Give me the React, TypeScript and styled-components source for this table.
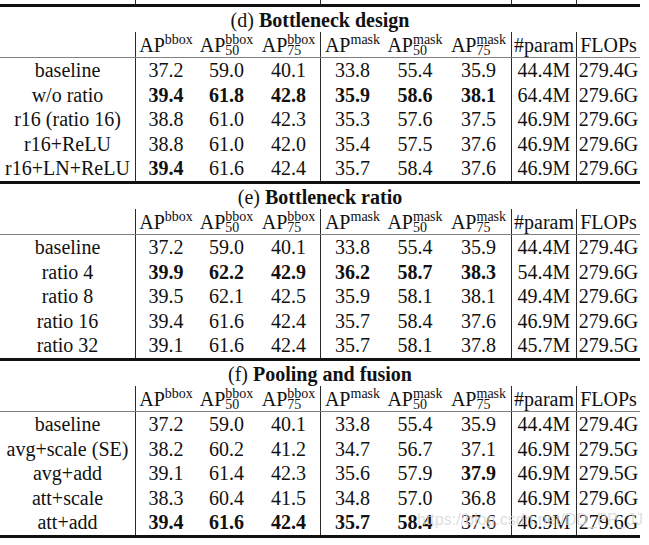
import React from 'react'
import styled, { createGlobalStyle } from 'styled-components'

const GlobalStyle = createGlobalStyle`
    body {
        margin: 0;
        background: #ffffff;
    }
`

// column widths, borders sit on the left edge of columns 1, 4, 7, 8
const columns = '135px 61px 61px 63px 64px 62px 65px 65px 64px'
const dividers = [1, 4, 7, 8]

const Page = styled.div`
    position: relative;
    width: 649px;
    height: 545px;
    background: #ffffff;
    font-family: 'Liberation Serif', 'Times New Roman', serif;
    color: #111111;
`

const Table = styled.div`
    width: 640px;
    display: flex;
    flex-direction: column;
`

const Row = styled.div<{ $height: number }>`
    display: grid;
    grid-template-columns: ${columns};
    height: ${p => p.$height}px;
`

const Cell = styled.div<{ $divider?: boolean; $bold?: boolean }>`
    box-sizing: border-box;
    border-left: ${p => (p.$divider ? '1px solid #2a2a2a' : 'none')};
    text-align: center;
    font-size: 20px;
    line-height: 24.6px;
    font-weight: ${p => (p.$bold ? 700 : 400)};
    white-space: nowrap;
`

const HeadCell = styled(Cell)`
    padding-top: 2px;
    line-height: 23px;
`

const Scripts = styled.span`
    display: inline-flex;
    flex-direction: column;
    align-items: flex-start;
    vertical-align: 8px;
    font-size: 14px;
    line-height: 11px;
`

const Script = styled.span`
    display: block;
`

const ThickRule = styled.div`
    height: 3px;
    background: #111111;
`

const HeadRule = styled.div`
    height: 1px;
    background: #808080;
`

const Title = styled.div`
    box-sizing: border-box;
    height: 25px;
    padding-top: 1px;
    line-height: 24px;
    font-size: 20px;
    text-align: center;
    white-space: nowrap;
`

const Watermark = styled.div`
    position: absolute;
    left: 417px;
    top: 511px;
    font-family: 'Liberation Sans', Arial, sans-serif;
    font-size: 16px;
    color: rgba(214, 214, 214, 0.8);
    white-space: nowrap;
    pointer-events: none;
`

type DataRow = {
    label: string
    values: string[]
    bold: number[]
}

type Section = {
    tag: string
    name: string
    rows: DataRow[]
}

const baseline: DataRow = {
    label: 'baseline',
    values: ['37.2', '59.0', '40.1', '33.8', '55.4', '35.9', '44.4M', '279.4G'],
    bold: []
}

const sections: Section[] = [
    {
        tag: '(d)',
        name: 'Bottleneck design',
        rows: [
            baseline,
            { label: 'w/o ratio', values: ['39.4', '61.8', '42.8', '35.9', '58.6', '38.1', '64.4M', '279.6G'], bold: [0, 1, 2, 3, 4, 5] },
            { label: 'r16 (ratio 16)', values: ['38.8', '61.0', '42.3', '35.3', '57.6', '37.5', '46.9M', '279.6G'], bold: [] },
            { label: 'r16+ReLU', values: ['38.8', '61.0', '42.0', '35.4', '57.5', '37.6', '46.9M', '279.6G'], bold: [] },
            { label: 'r16+LN+ReLU', values: ['39.4', '61.6', '42.4', '35.7', '58.4', '37.6', '46.9M', '279.6G'], bold: [0] }
        ]
    },
    {
        tag: '(e)',
        name: 'Bottleneck ratio',
        rows: [
            baseline,
            { label: 'ratio 4', values: ['39.9', '62.2', '42.9', '36.2', '58.7', '38.3', '54.4M', '279.6G'], bold: [0, 1, 2, 3, 4, 5] },
            { label: 'ratio 8', values: ['39.5', '62.1', '42.5', '35.9', '58.1', '38.1', '49.4M', '279.6G'], bold: [] },
            { label: 'ratio 16', values: ['39.4', '61.6', '42.4', '35.7', '58.4', '37.6', '46.9M', '279.6G'], bold: [] },
            { label: 'ratio 32', values: ['39.1', '61.6', '42.4', '35.7', '58.1', '37.8', '45.7M', '279.5G'], bold: [] }
        ]
    },
    {
        tag: '(f)',
        name: 'Pooling and fusion',
        rows: [
            baseline,
            { label: 'avg+scale (SE)', values: ['38.2', '60.2', '41.2', '34.7', '56.7', '37.1', '46.9M', '279.5G'], bold: [] },
            { label: 'avg+add', values: ['39.1', '61.4', '42.3', '35.6', '57.9', '37.9', '46.9M', '279.5G'], bold: [5] },
            { label: 'att+scale', values: ['38.3', '60.4', '41.5', '34.8', '57.0', '36.8', '46.9M', '279.6G'], bold: [] },
            { label: 'att+add', values: ['39.4', '61.6', '42.4', '35.7', '58.4', '37.6', '46.9M', '279.6G'], bold: [0, 1, 2, 3, 4] }
        ]
    }
]

const headers: { sup?: string; sub?: string; text: string }[] = [
    { text: 'AP', sup: 'bbox' },
    { text: 'AP', sup: 'bbox', sub: '50' },
    { text: 'AP', sup: 'bbox', sub: '75' },
    { text: 'AP', sup: 'mask' },
    { text: 'AP', sup: 'mask', sub: '50' },
    { text: 'AP', sup: 'mask', sub: '75' },
    { text: '#param' },
    { text: 'FLOPs' }
]

const HeaderRow = () => (
    <Row $height={25}>
        <HeadCell />
        {headers.map((h, i) => (
            <HeadCell key={i} $divider={dividers.includes(i + 1)}>
                {h.text}
                {h.sup && (
                    <Scripts>
                        <Script>{h.sup}</Script>
                        {h.sub && <Script>{h.sub}</Script>}
                    </Scripts>
                )}
            </HeadCell>
        ))}
    </Row>
)

const App = () => (
    <Page>
        <GlobalStyle />
        <Table>
            <Row $height={4}>
                {Array.from({ length: 9 }).map((_, i) => (
                    <Cell key={i} $divider={dividers.includes(i)} />
                ))}
            </Row>
            <ThickRule />
            {sections.map(s => (
                <React.Fragment key={s.tag}>
                    <Title>
                        {s.tag} <b>{s.name}</b>
                    </Title>
                    <HeaderRow />
                    <HeadRule />
                    {s.rows.map(r => (
                        <Row key={r.label} $height={24.6}>
                            <Cell>{r.label}</Cell>
                            {r.values.map((v, i) => (
                                <Cell key={i} $divider={dividers.includes(i + 1)} $bold={r.bold.includes(i)}>
                                    {v}
                                </Cell>
                            ))}
                        </Row>
                    ))}
                    <ThickRule />
                </React.Fragment>
            ))}
        </Table>
        <Watermark>https://blog.csdn.net/DD_PP_JJ</Watermark>
    </Page>
)

export default App
